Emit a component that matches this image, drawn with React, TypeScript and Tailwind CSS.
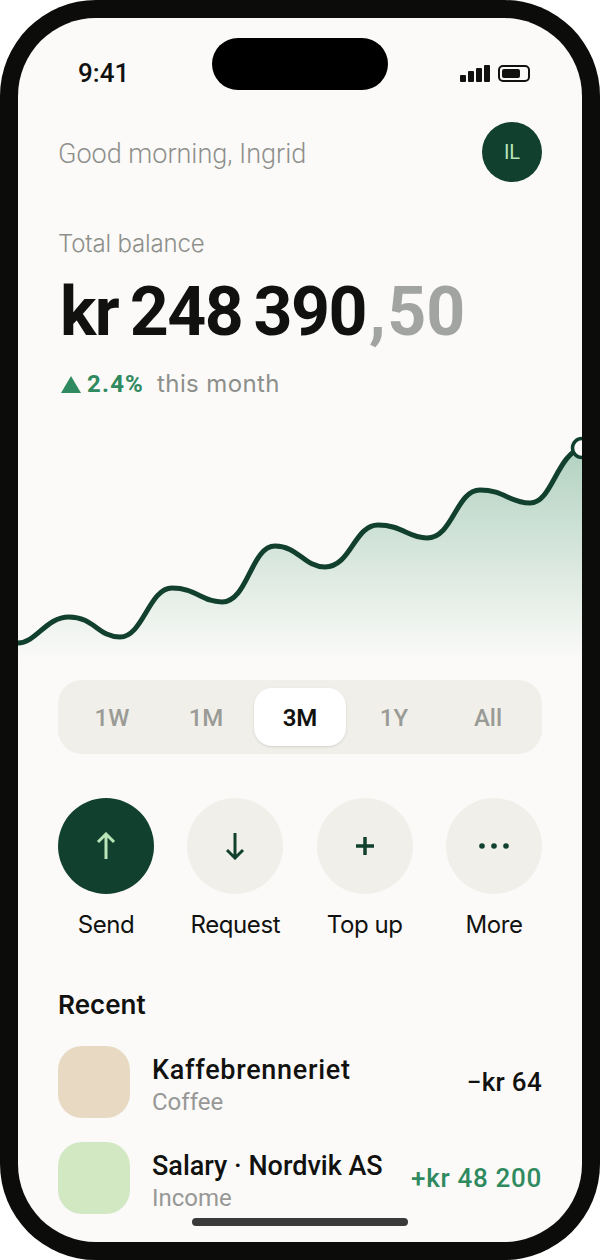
import React from "react";

const ranges = ["1W", "1M", "3M", "1Y", "All"];

const linePath =
  "M0,223 C18,223 28,197 51,197 C76,197 80,217 102,217 C125,217 131,168 154,168 C178,168 184,182 204,182 C230,182 233,126 257,126 C280,126 286,147 307,147 C333,147 336,105 360,105 C384,105 390,118 409,118 C435,118 438,70 462,70 C486,70 492,83 512,83 C534,83 538,36 564,27";

const ArrowUp = () => (
  <svg width="20" height="28" viewBox="0 0 20 28" fill="none" stroke="#b9e5b9" strokeWidth="3">
    <path d="M10 27V2M2 10l8-8 8 8" />
  </svg>
);

const ArrowDown = () => (
  <svg width="20" height="28" viewBox="0 0 20 28" fill="none" stroke="#12402f" strokeWidth="3">
    <path d="M10 1v25M2 18l8 8 8-8" />
  </svg>
);

const Plus = () => (
  <svg width="18" height="18" viewBox="0 0 18 18" fill="none" stroke="#12402f" strokeWidth="3.5">
    <path d="M9 0v18M0 9h18" />
  </svg>
);

const Dots = () => (
  <svg width="30" height="6" viewBox="0 0 30 6" fill="#12402f">
    <circle cx="3" cy="3" r="2.8" />
    <circle cx="15" cy="3" r="2.8" />
    <circle cx="27" cy="3" r="2.8" />
  </svg>
);

const actions = [
  { label: "Send", icon: <ArrowUp />, circle: "bg-[#12402f]" },
  { label: "Request", icon: <ArrowDown />, circle: "bg-[#f0efe9]" },
  { label: "Top up", icon: <Plus />, circle: "bg-[#f0efe9]" },
  { label: "More", icon: <Dots />, circle: "bg-[#f0efe9]" },
];

export default function App() {
  return (
    <div className="w-[600px] h-[1260px] bg-white font-['Roboto',sans-serif] text-[#111210]">
      <div className="relative w-full h-full rounded-[96px] bg-[#0c0c0b] p-[18px]">
        <div className="relative h-full rounded-[78px] bg-[#fbfaf8] overflow-hidden flex flex-col">
          {/* island */}
          <div className="absolute left-[194px] top-[20px] w-[176px] h-[52px] rounded-full bg-black" />

          {/* status bar */}
          <div className="flex items-center justify-between pl-[60px] pr-[52px] pt-[32px] h-[78px]">
            <span className="text-[26px] leading-[26px] font-medium">9:41</span>
            <div className="flex items-center gap-2">
              <div className="flex items-end gap-[2px] h-[17px]">
                <div className="w-[6px] h-[7px] bg-[#111210] rounded-[1px]" />
                <div className="w-[6px] h-[11px] bg-[#111210] rounded-[1px]" />
                <div className="w-[6px] h-[14px] bg-[#111210] rounded-[1px]" />
                <div className="w-[6px] h-[17px] bg-[#111210] rounded-[1px]" />
              </div>
              <div className="w-[32px] h-[17px] rounded-[5px] border-2 border-[#111210] p-[2px] pr-[8px]">
                <div className="w-full h-full rounded-[2px] bg-[#111210]" />
              </div>
            </div>
          </div>

          <div className="flex-1 flex flex-col">
            {/* greeting */}
            <div className="flex items-center justify-between px-10 mt-[26px]">
              <span className="pt-1 text-[27px] leading-8 font-light text-[#8d8f8b]">Good morning, Ingrid</span>
              <div className="w-[60px] h-[60px] rounded-full bg-[#12402f] flex items-center justify-center text-[20px] text-[#b9e5b9]">
                IL
              </div>
            </div>

            {/* balance */}
            <div className="px-10 mt-[46px]">
              <div className="font-['Inter',sans-serif] text-[24px] leading-8 font-light text-[#8d8f8b] tracking-[-0.15px]">
                Total balance
              </div>
              <div className="mt-[14px] ml-[2px] text-[68px] leading-[76px] font-bold tracking-[-1.5px] [word-spacing:-4px] whitespace-nowrap">
                kr 248 390
                <span className="text-[#a1a4a0]">
                  <span className="ml-[3px] mr-[3px]">,</span>
                  <span className="tracking-[0px]">50</span>
                </span>
              </div>
              <div className="mt-[18px] flex items-center text-[24px] leading-8">
                <svg width="20" height="17" viewBox="0 0 20 17" className="ml-[3px]" fill="#2f8a5f">
                  <path d="M10 0l10 17H0z" />
                </svg>
                <span className="ml-[6px] font-bold text-[#2f8a5f] tracking-[1.2px]">2.4%</span>
                <span className="ml-[13px] font-['Inter',sans-serif] text-[#8d8f8b] tracking-[0.4px]">this month</span>
              </div>
            </div>

            {/* chart */}
            <svg width="564" height="240" viewBox="0 0 564 240" className="block mt-[20px] shrink-0">
              <defs>
                <linearGradient id="area" gradientUnits="userSpaceOnUse" x1="0" y1="27" x2="0" y2="240">
                  <stop offset="0" stopColor="#2f8a5f" stopOpacity="0.36" />
                  <stop offset="1" stopColor="#2f8a5f" stopOpacity="0" />
                </linearGradient>
              </defs>
              <path d={`${linePath} V240 H0 Z`} fill="url(#area)" />
              <path d={linePath} fill="none" stroke="#12402f" strokeWidth="5" strokeLinecap="round" />
              <circle cx="564" cy="28" r="9.5" fill="#fbfaf8" stroke="#12402f" strokeWidth="3.5" />
            </svg>

            {/* range picker */}
            <div className="mx-10 mt-[20px] p-2 h-[74px] rounded-[24px] bg-[#f0efe9] grid grid-cols-5 gap-[2px]">
              {ranges.map((r) =>
                r === "3M" ? (
                  <div
                    key={r}
                    className="rounded-[18px] bg-white shadow-sm flex items-center justify-center pt-px text-[24px] font-semibold text-[#111210]"
                  >
                    {r}
                  </div>
                ) : (
                  <div key={r} className="flex items-center justify-center pt-px text-[24px] font-medium text-[#9a9b96]">
                    {r}
                  </div>
                )
              )}
            </div>

            {/* actions */}
            <div className="mx-10 mt-[44px] flex justify-between">
              {actions.map((a) => (
                <div key={a.label} className="w-[96px] flex flex-col items-center">
                  <div className={`w-[96px] h-[96px] rounded-full flex items-center justify-center ${a.circle}`}>
                    {a.icon}
                  </div>
                  <span className="mt-[15px] font-['Inter',sans-serif] text-[24px] leading-8 tracking-[-0.4px] whitespace-nowrap">
                    {a.label}
                  </span>
                </div>
              ))}
            </div>

            {/* recent */}
            <div className="px-10 mt-[48px] font-['Inter',sans-serif] text-[26px] leading-8 font-semibold">Recent</div>
            <div className="px-10 mt-[25px] flex flex-col gap-6">
              <div className="flex items-center">
                <div className="w-[72px] h-[72px] rounded-[24px] bg-[#e8d9c3]" />
                <div className="ml-[22px] flex-1 self-start pt-2">
                  <div className="text-[27px] leading-8 font-medium tracking-[0.7px]">Kaffebrenneriet</div>
                  <div className="text-[24px] leading-8 text-[#979896]">Coffee</div>
                </div>
                <div className="text-[26px] font-medium tracking-[0.3px]">−kr 64</div>
              </div>
              <div className="flex items-center">
                <div className="w-[72px] h-[72px] rounded-[24px] bg-[#d1e8c3]" />
                <div className="ml-[22px] flex-1 self-start pt-2">
                  <div className="text-[27px] leading-8 font-medium whitespace-nowrap">Salary · Nordvik AS</div>
                  <div className="text-[24px] leading-8 text-[#979896]">Income</div>
                </div>
                <div className="text-[26px] font-medium text-[#2f8a5f] tracking-[0.7px] whitespace-nowrap">+kr 48 200</div>
              </div>
            </div>
          </div>

          {/* home indicator */}
          <div className="absolute left-[174px] bottom-4 w-[216px] h-2 rounded-full bg-[#3a3a3a]" />
        </div>
      </div>
    </div>
  );
}
